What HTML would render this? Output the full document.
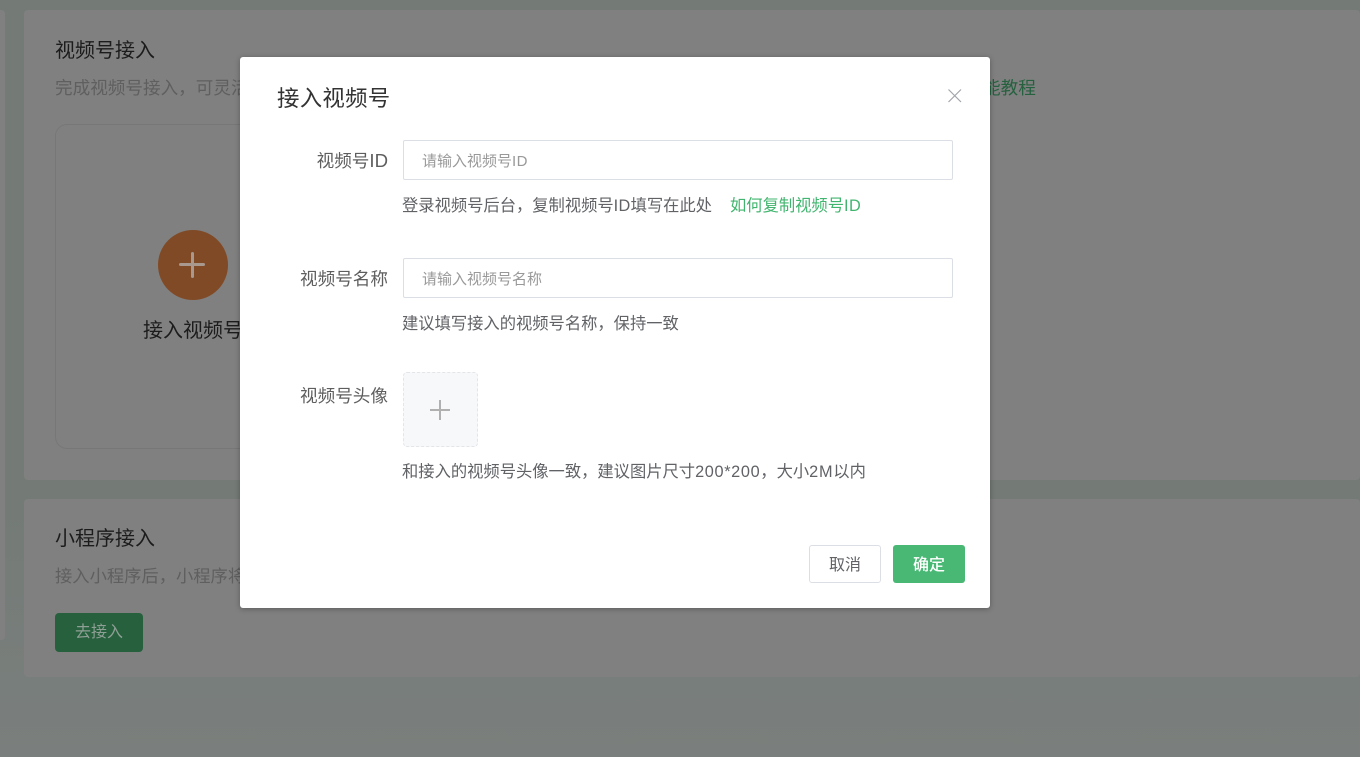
<!DOCTYPE html>
<html lang="zh">
<head>
<meta charset="utf-8">
<title>接入视频号</title>
<style>
*{box-sizing:border-box;margin:0;padding:0}
html,body{width:1360px;height:757px;overflow:hidden}
body{position:relative;background:#7a7f7d;font-family:"Noto Sans CJK SC","Liberation Sans",sans-serif}
.a{position:absolute;white-space:nowrap}
.t{line-height:24px;height:24px}
.l{font-family:"Liberation Sans",sans-serif}
</style>
</head>
<body>
<div class="a" style="left:0;top:0;width:1360px;height:757px;background:linear-gradient(#747b77 0,#747b76 500px,#7a7f7d 757px)"></div>
<div class="a" style="left:0;top:10px;width:5px;height:630px;background:#808080;border-radius:0 4px 4px 0"></div>
<div class="a" style="left:24px;top:10px;width:1336px;height:470px;background:#808080;border-radius:4px"></div>
<div class="a" style="left:24px;top:499px;width:1336px;height:178px;background:#808080;border-radius:4px"></div>

<div class="a t" style="left:55px;top:37px;font-size:20px;color:#1c1c1c">视频号接入</div>
<div class="a t" style="left:55px;top:76px;font-size:17.6px;color:#5f5f5f">完成视频号接入，可灵活</div>
<div class="a t" style="left:983px;top:76px;font-size:17.6px;color:#25613f">能教程</div>
<div class="a" style="left:55px;top:124px;width:300px;height:325px;border:1px solid #777;border-radius:12px"></div>
<div class="a" style="left:158px;top:230px;width:70px;height:70px;border-radius:50%;background:#804a26"></div>
<div class="a" style="left:179px;top:263px;width:26px;height:3px;background:#a8988e;border-radius:2px"></div>
<div class="a" style="left:191px;top:252px;width:3px;height:26px;background:#a8988e;border-radius:2px"></div>
<div class="a t" style="left:143px;top:317px;font-size:20px;color:#1c1c1c">接入视频号</div>

<div class="a t" style="left:55px;top:525px;font-size:20px;color:#1c1c1c">小程序接入</div>
<div class="a t" style="left:55px;top:563px;font-size:17.3px;color:#5f5f5f">接入小程序后，小程序将</div>
<div class="a" style="left:55px;top:613px;width:88px;height:39px;background:#26603d;border-radius:4px;color:#8f9f95;font-size:16px;line-height:34px;text-align:center">去接入</div>

<div class="a" style="left:240px;top:57px;width:750px;height:551px;background:#fff;border-radius:3px;box-shadow:0 1px 6px rgba(0,0,0,.3)">
  <div class="a" style="left:37px;top:24px;font-size:22.4px;letter-spacing:.3px;line-height:32px;color:#333">接入视频号</div>
  <svg class="a" style="left:707px;top:31px" width="16" height="16" viewBox="0 0 16 16"><path d="M1.5 1.5L14 14M14 1.5L1.5 14" stroke="#a2a5aa" stroke-width="1.2" fill="none"/></svg>

  <div class="a t" style="right:602px;top:92px;font-size:17.6px;color:#5e5e5e">视频号<span class="l" style="font-size:18.6px">ID</span></div>
  <div class="a" style="left:163px;top:83px;width:550px;height:40px;border:1px solid #dcdee6;border-radius:2px"></div>
  <div class="a t" style="left:182px;top:92px;font-size:15px;color:#999">请输入视频号<span class="l" style="letter-spacing:.4px">ID</span></div>
  <div class="a t" style="left:162px;top:135px;font-size:16.3px;color:#606266">登录视频号后台，复制视频号<span class="l" style="letter-spacing:.3px">ID</span>填写在此处</div>
  <div class="a t" style="left:490px;top:135px;font-size:16.3px;color:#41b56f">如何复制视频号<span class="l" style="letter-spacing:.5px">ID</span></div>

  <div class="a t" style="right:602px;top:210px;font-size:17.6px;color:#5e5e5e">视频号名称</div>
  <div class="a" style="left:163px;top:201px;width:550px;height:40px;border:1px solid #dcdee6;border-radius:2px"></div>
  <div class="a t" style="left:182px;top:210px;font-size:15px;color:#999">请输入视频号名称</div>
  <div class="a t" style="left:162px;top:253px;font-size:16.3px;color:#606266">建议填写接入的视频号名称，保持一致</div>

  <div class="a t" style="right:602px;top:327px;font-size:17.6px;color:#5e5e5e">视频号头像</div>
  <div class="a" style="left:163px;top:315px;width:75px;height:75px;background:#f7f8fa;border:1px dashed #e4e5e9;border-radius:4px"></div>
  <div class="a" style="left:190px;top:352px;width:20px;height:2px;background:#b0b0b0"></div>
  <div class="a" style="left:199px;top:343px;width:2px;height:20px;background:#b0b0b0"></div>
  <div class="a t" style="left:162px;top:401px;font-size:16.3px;color:#606266">和接入的视频号头像一致，建议图片尺寸<span class="l" style="letter-spacing:.65px">200*200</span>，大小<span class="l" style="letter-spacing:.75px">2M</span>以内</div>

  <div class="a" style="left:569px;top:488px;width:72px;height:38px;border:1px solid #dcdee6;border-radius:3px;background:#fff;color:#606266;font-size:16px;line-height:35px;text-align:center">取消</div>
  <div class="a" style="left:653px;top:488px;width:72px;height:38px;border-radius:3px;background:#48b874;color:#fff;font-size:16px;font-weight:500;line-height:37px;text-align:center">确定</div>
</div>
</body>
</html>
